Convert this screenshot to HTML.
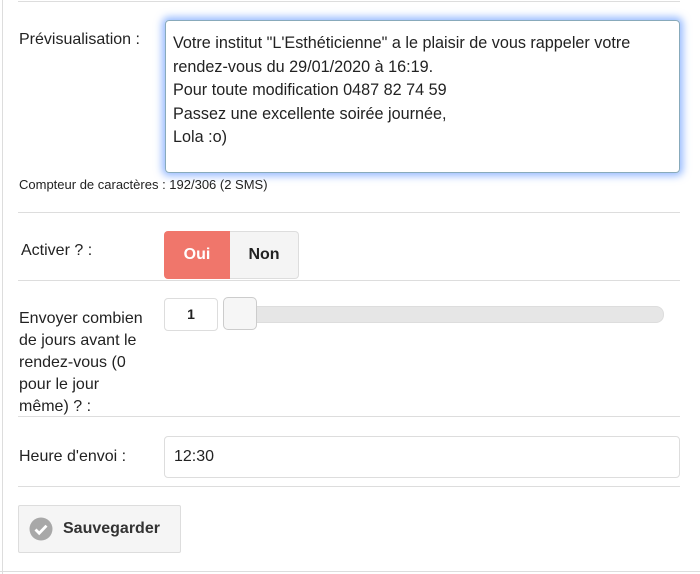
<!DOCTYPE html>
<html><head><meta charset="utf-8"><style>
*{box-sizing:border-box}
body{margin:0;width:700px;height:574px;background:#fff;font-family:"Liberation Sans",sans-serif;color:#222;position:relative;overflow:hidden}
.a{position:absolute}
.hl{position:absolute;left:18px;width:662px;height:1px;background:#ddd}
.lbl{font-size:16px;color:#222;line-height:22px}
</style></head><body>
<div class="a" style="left:2px;top:0;width:1px;height:574px;background:#ddd"></div>
<div class="a" style="left:0;top:571px;width:700px;height:1px;background:#ddd"></div>
<div class="hl" style="top:1px"></div>
<div class="a lbl" style="left:19px;top:29px">Prévisualisation :</div>
<div class="a" style="left:165px;top:20px;width:515px;height:153px;border:1px solid #8ab;border-radius:4px;box-shadow:0 0 8px 3px rgba(80,140,255,.6);padding:11px 7px;font-size:16.2px;line-height:23.5px;color:#222">Votre institut "L'Esthéticienne" a le plaisir de vous rappeler votre rendez-vous du 29/01/2020 à 16:19.<br>Pour toute modification 0487 82 74 59<br>Passez une excellente soirée journée,<br>Lola :o)</div>
<div class="a" style="left:19px;top:177px;font-size:13px;color:#222">Compteur de caractères : 192/306 (2 SMS)</div>
<div class="hl" style="top:212px"></div>
<div class="a lbl" style="left:21px;top:240px">Activer ? :</div>
<div class="a" style="left:164px;top:231px;width:66px;height:48px;background:#f0766b;border-radius:4px 0 0 4px;color:#fff;font-weight:bold;font-size:16px;text-align:center;line-height:48px">Oui</div>
<div class="a" style="left:230px;top:231px;width:69px;height:48px;background:#f4f4f4;border:1px solid #ddd;border-left:0;border-radius:0 4px 4px 0;color:#222;font-weight:bold;font-size:16px;text-align:center;line-height:46px">Non</div>
<div class="hl" style="top:280px"></div>
<div class="a lbl" style="left:19px;top:308px;line-height:22px">Envoyer combien<br>de jours avant le<br>rendez-vous (0<br>pour le jour<br>même) ? :</div>
<div class="a" style="left:164px;top:298px;width:54px;height:33px;border:1px solid #ddd;border-radius:4px;font-weight:bold;font-size:14px;text-align:center;line-height:31px">1</div>
<div class="a" style="left:224px;top:306px;width:440px;height:17px;background:#e6e6e6;border:1px solid #ddd;border-radius:8px"></div>
<div class="a" style="left:223px;top:297px;width:34px;height:33px;background:#f6f6f6;border:1px solid #ccc;border-radius:5px"></div>
<div class="hl" style="top:416px"></div>
<div class="a lbl" style="left:19px;top:446px">Heure d'envoi :</div>
<div class="a" style="left:164px;top:436px;width:516px;height:42px;border:1px solid #ddd;border-radius:4px;padding-left:9px;font-size:16px;line-height:40px">12:30</div>
<div class="hl" style="top:486px"></div>
<div class="a" style="left:18px;top:505px;width:163px;height:48px;background:#f5f5f5;border:1px solid #ddd;border-radius:2px"></div>
<svg class="a" style="left:29px;top:517px" width="24" height="24" viewBox="0 0 24 24"><circle cx="12" cy="12" r="11.5" fill="#a8a8a8"/><path d="M6.5 12.5l3.7 3.7 7.3-7.5" stroke="#fff" stroke-width="2.8" fill="none"/></svg>
<div class="a" style="left:63px;top:520px;font-weight:bold;font-size:16px;color:#333">Sauvegarder</div>
</body></html>
